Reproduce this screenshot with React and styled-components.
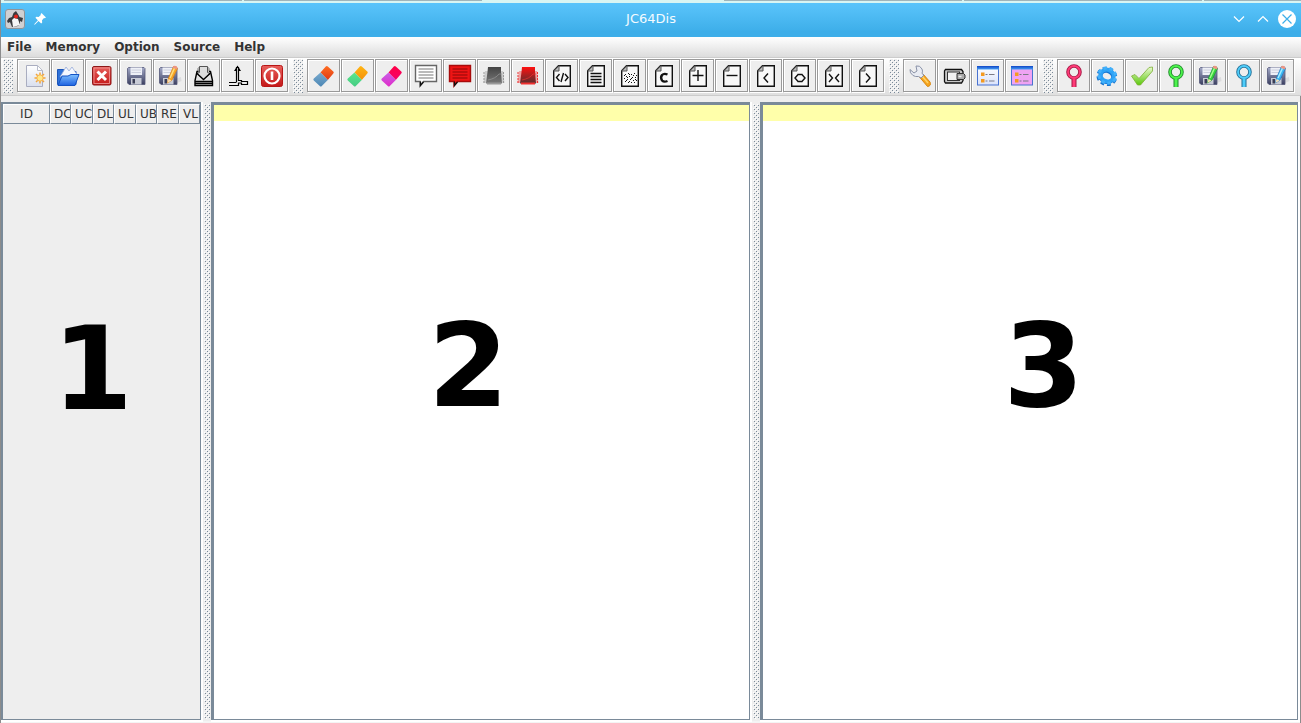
import React from "react";
import styled, { createGlobalStyle } from "styled-components";

const GlobalStyle = createGlobalStyle`
  html, body { margin: 0; padding: 0; }
  body { background: #eeeeee; font-family: "DejaVu Sans", sans-serif; }
  *, *::before, *::after { box-sizing: border-box; }
`;

const Desktop = styled.div`
  display: flex;
  flex-direction: column;
  min-height: 100vh;
  padding-left: 1px;
  background: #8c8c8c;
`;

const BackgroundTabs = styled.div`
  display: flex;
  height: 3px;
  padding-left: 2px;
  overflow: hidden;
  background: #d8f5f3;
`;

const BackgroundTab = styled.div`
  flex: 0 0 238px;
  margin: 0 1px 2px 1px;
  background: ${(p) => (p.$active ? "#d8f5f3" : "#9eb4bb")};
`;

const TitleBar = styled.header`
  display: grid;
  grid-template-columns: 1fr auto 1fr;
  align-items: center;
  height: 34px;
  padding: 0 4px 2px;
  background: linear-gradient(#58c4fb, #52bef6 25%, #3daee9 85%);
`;

const TitleIcons = styled.div`
  display: flex;
  align-items: center;
  gap: 8px;
`;

const Title = styled.h1`
  margin: 0;
  font: 400 13px/18px "DejaVu Sans", sans-serif;
  color: #f4fbff;
`;

const WindowControls = styled.div`
  display: flex;
  justify-content: flex-end;
  gap: 4px;
`;

const WindowButton = styled.button`
  display: flex;
  width: 20px;
  height: 20px;
  padding: 0;
  border: 0;
  background: none;
`;

const MenuBar = styled.nav`
  display: flex;
  gap: 14px;
  height: 20px;
  padding: 0 6px;
  background: linear-gradient(#ffffff, #dcdcdc);
`;

const MenuButton = styled.button`
  padding: 0;
  border: 0;
  background: none;
  color: #333333;
  font: 700 12px/20px "DejaVu Sans", sans-serif;
`;

const ToolBar = styled.div`
  display: flex;
  gap: 5px;
  height: 39px;
  padding: 1px 0 2px 2px;
  border-top: 1px solid #cccccc;
  border-bottom: 1px solid #cccccc;
  background: linear-gradient(#ffffff, #dfdfdf);
`;

const ToolGroup = styled.div`
  display: flex;
  gap: 1px;
`;

const Grip = styled.div`
  width: 10px;
  height: 34px;
  margin-right: 3px;
`;

const ToolButton = styled.button`
  display: flex;
  align-items: center;
  justify-content: center;
  width: 33px;
  height: 33px;
  padding: 0;
  border: 1px solid #999999;
  background: #eeeeee;
  box-shadow: inset 1px 1px 0 #ffffff, 1px 1px 0 #ffffff;
`;

const Workspace = styled.main`
  flex: 1;
  display: grid;
  grid-template-columns: 202px 8px 541fr 8px 540fr;
  margin-right: 1px;
  padding-top: 6px;
  border-bottom: 2px solid #f4f4f4;
  background: #eeeeee;
`;

const Panel = styled.section`
  min-width: 0;
  border-style: solid;
  border-color: #7a8a99;
  border-width: ${(p) => (p.$text ? "3px 1px 1px 3px" : "2px 1px 1px 2px")};
  margin-right: 2px;
  margin-bottom: 1px;
  box-shadow: 1px 1px 0 1px #ffffff;
  background: ${(p) => (p.$text ? "#ffffff" : "#eeeeee")};
`;

const Divider = styled.div`
  background: #eeeeee;
  padding: 2px 1px;
`;

const MemoryTable = styled.table`
  width: 197px;
  table-layout: fixed;
  border-collapse: separate;
  border-spacing: 0;
`;

const HeadCell = styled.th`
  width: ${(p) => p.$width}px;
  height: 20px;
  padding: ${(p) => (p.$centered ? "0" : "0 0 0 3px")};
  border-style: solid;
  border-width: 1px;
  border-color: #ffffff #7a8a99 #7a8a99 #ffffff;
  overflow: hidden;
  white-space: nowrap;
  text-align: ${(p) => (p.$centered ? "center" : "left")};
  font: 400 12px/18px "DejaVu Sans", sans-serif;
  color: #333333;
`;

const CurrentLine = styled.div`
  height: 16px;
  background: #ffffaa;
`;

const PanelNumber = styled.div`
  padding-top: 177px;
  padding-left: ${(p) => p.$indent};
  font: 700 116px/136px "DejaVu Sans", sans-serif;
  color: #000000;
`;

function Bumps({ id }) {
  return (
    <svg width="100%" height="100%" display="block" shapeRendering="crispEdges" aria-hidden="true">
      <defs>
        <pattern id={id} width="4" height="4" patternUnits="userSpaceOnUse">
          <rect width="4" height="4" fill="#eeeeee" />
          <path d="M0 0h1v1h-1zM2 2h1v1h-1z" fill="#ffffff" />
          <path d="M1 1h1v1h-1zM3 3h1v1h-1z" fill="#7a8a99" />
        </pattern>
      </defs>
      <rect width="100%" height="100%" fill={`url(#${id})`} />
    </svg>
  );
}

const Icon = ({ children }) => (
  <svg width="25" height="25" viewBox="0 0 25 25" fill="none" aria-hidden="true">
    {children}
  </svg>
);

const NewIcon = () => (
  <Icon>
    <path d="M5.5 2.5h11l5 5v16h-16z" fill="url(#paper)" stroke="#a9adc0" />
    <path d="M16.500 2.500v5h5z" fill="#ffffff" stroke="#b9bdcb" />
    <g stroke="#f3a53c" strokeWidth="1.500">
      <path d="M19 9.500v11M13.500 15h11M15 11l8 8M23 11l-8 8" />
    </g>
    <circle cx="19" cy="15" r="3.200" fill="#ffe98a" stroke="#f5b14c" />
  </Icon>
);

const OpenIcon = () => (
  <Icon>
    <path d="M2.500 6.500h6l1.500 2h11v13h-18.500z" fill="#2f72d8" stroke="#1c55b8" />
    <path d="M5 14l6-10 3 4 3-4 6 9z" fill="#f5f8ff" stroke="#95a9d8" strokeWidth=".8" />
    <path d="M3 22.500l4-9.500 6 0 3-1.500h8l-4 11z" fill="url(#folder)" stroke="#1453c4" />
  </Icon>
);

const CloseIcon = () => (
  <Icon>
    <rect x="3.500" y="3.500" width="18.500" height="18.500" rx="1.500" fill="url(#red)" stroke="#8c1717" />
    <rect x="5" y="5" width="15.500" height="15.500" stroke="#f09a98" strokeWidth=".8" />
    <path d="M8.500 8.500l8.500 8.500M17 8.500l-8.500 8.500" stroke="#fff" strokeWidth="3" />
  </Icon>
);

const Floppy = () => (
  <>
    <path d="M5.500 4.500h15.500l1 1v16h-16l-1.500-1.500v-14.500z" fill="url(#floppy)" stroke="#55597a" strokeWidth=".8" />
    <rect x="7.500" y="4.500" width="11.500" height="7.500" fill="#eef0f7" />
    <path d="M8.500 7h9.500M8.500 9.500h9.500" stroke="#c3c7d6" strokeWidth=".8" />
    <rect x="8" y="15" width="10.500" height="6.500" fill="#c8cbd6" />
    <rect x="9.500" y="16" width="2.500" height="4.500" fill="#3a3d55" />
  </>
);

const SaveIcon = () => (
  <Icon>
    <Floppy />
  </Icon>
);

const SaveAsIcon = ({ color = "#f9a825", light = "#ffdf80", dark = "#d77a13" }) => (
  <Icon>
    <path d="M18 16l6-2 .5 4-6.500 3z" fill="#dcdcde" />
    <g transform="translate(-2 0)">
      <Floppy />
    </g>
    <path d="M10.500 20l1-5 5-11.500q3-1 4 2l-5.500 11.500z" fill={color} stroke={dark} strokeWidth=".7" />
    <path d="M13 15l5-11" stroke={light} strokeWidth="1.500" />
    <path d="M10.500 20l1-4 3 1.500z" fill="#f7dfb5" />
    <path d="M16.500 3q3-1 4 2l-.8 1.500-4-1.700z" fill="#ed9583" />
  </Icon>
);

const ExportIcon = () => (
  <Icon>
    <path d="M9 3.500h7l2 2v7h-11v-7z" fill="#ddd" stroke="#777" />
    <path d="M7.500 8.500h-1.500l-2 9v5h17.500v-5l-2-9h-1.500" fill="#e2e2e2" stroke="#000" strokeWidth="1.400" />
    <path d="M8.500 3.500v6l-2.500 1 6.500 6 6.500-6-2.500-1v-6z" fill="#dedede" stroke="#555" strokeWidth="1" />
    <path d="M5.500 10l7 6.500 7-6.500" stroke="#000" strokeWidth="1.300" />
    <path d="M4 18.500h17.500M4 20.500h17.500" stroke="#000" strokeWidth="1.300" />
  </Icon>
);

const MergeIcon = () => (
  <Icon>
    <path d="M11.500 19v-15M13.500 18v-14M4 19.500h7.500M4 22.500h9.500v-2.500h3v1.500h6v-3h-6v-1h-3" stroke="#000" strokeWidth="1.200" />
    <path d="M9 8l3.500-5.500 3.500 5.500h-2.500v-3h-2v3z" fill="#000" />
  </Icon>
);

const ExitIcon = () => (
  <Icon>
    <rect x="2.500" y="2.500" width="21" height="21" rx="2" fill="url(#red)" stroke="#b81616" />
    <circle cx="13" cy="13" r="7.500" stroke="#fff" strokeWidth="2.200" />
    <path d="M13 8.500v8.500" stroke="#fff" strokeWidth="2.600" />
  </Icon>
);

const EraserIcon = ({ top, bottom }) => (
  <Icon>
    <path d="M9.500 9.500l5.300-6q1-1 2 0l5.500 5q1 1 0 2l-5.500 6.500z" fill={`url(#${top})`} />
    <path d="M9.500 9.500l7.300 7.500-6 6q-1 1-2 0l-6-5.500q-1-1 0-2z" fill={`url(#${bottom})`} />
  </Icon>
);

const CommentIcon = ({ fill, line, stroke }) => (
  <Icon>
    <path d="M2.500 2.500h21v16h-13l-3.500 4.500v-4.500h-4.500z" fill={fill} stroke={stroke} strokeWidth="1.400" />
    <path d="M5.500 6h15M5.500 9h15M5.500 12h15M5.500 15h15" stroke={line} strokeWidth="1.200" />
    <path d="M7.500 18.500v4l3-3.500" stroke="#111" strokeWidth="1.200" />
  </Icon>
);

const BlockIcon = ({ edge, from }) => (
  <Icon>
    <path d="M4 8h18l1.500 12h-21z" fill={edge} opacity=".4" />
    <path d="M3 9v11M22.500 9v11" stroke={edge} strokeDasharray="2 1" />
    <path d="M7 4h13v5l1 11.500h-16l1.500-11.500z" fill={`url(#${from})`} />
    <path d="M7 17c5-1 9-3 11-6h3" stroke={edge} opacity=".7" />
    <path d="M6 20.500h14" stroke={edge} strokeWidth="2" />
  </Icon>
);

const PageIcon = ({ children }) => (
  <Icon>
    <path d="M9.500 2.700h11.800v20.600h-16.600v-15.500z" fill="#f8f8f8" stroke="#111" strokeWidth="1.400" />
    <path d="M10 2.700v5.300h-5.300z" fill="#b9b9b9" stroke="#555" strokeWidth="1" />
    <g stroke="#111" strokeWidth="1.400">{children}</g>
  </Icon>
);

const NOISE = [
  [8, 11], [11, 10], [14, 11], [17, 10], [19, 12], [9, 13], [12, 13], [15, 14], [18, 14], [7, 15],
  [10, 16], [13, 16], [16, 17], [19, 17], [8, 18], [11, 19], [14, 19], [17, 19], [12, 11], [16, 12],
  [7, 12], [10, 14], [14, 15], [9, 17], [18, 16], [12, 18],
];

const WrenchIcon = () => (
  <Icon>
    <path d="M12.500 14l3.500-3 7 8q1.500 4-2.500 4.500z" fill="#f6a51f" stroke="#d9860f" />
    <path d="M15 13l6 7" stroke="#ffd469" strokeWidth="1.500" />
    <path d="M3 6.500l4 3.500 3-2-1-5q4-1 6 3 1 2 0 4.500l2 1.500-3 3-2.500-1.500q-3 .5-5.500-1-3.500-2.500-3-6z" fill="#e9ecf3" stroke="#8b93a8" />
  </Icon>
);

const TapeIcon = () => (
  <Icon>
    <path d="M4.500 6.500h16l1.500 2v9l-1.500 2.500h-16l-1-1.500v-10.500z" fill="#c8c8c8" stroke="#111" strokeWidth="1.300" />
    <rect x="6.500" y="9" width="12" height="8.500" fill="#f3f3f3" stroke="#333" />
    <path d="M16 10.500h6.500l1.500 1.500v3l-1.500 1.500h-6.500z" fill="#aaa" stroke="#333" />
    <path d="M17.500 13.500h3" stroke="#eee" strokeWidth="1.500" />
  </Icon>
);

const FormIcon = ({ fill }) => (
  <Icon>
    <rect x="2.500" y="3.500" width="21" height="18.500" fill={fill} stroke="#4973d1" />
    <rect x="2" y="3" width="22" height="3.500" fill="url(#formbar)" />
    <path d="M6 9.500h3.500v3.500h-3.500zM6 16h3.500v3.500h-3.500z" fill="#f49a20" />
    <path d="M10.500 11.500h2M14 11.500h5.500M10.500 18h2M14 18h5.500" stroke="#7b7b86" strokeWidth="1.200" />
  </Icon>
);

const PinIcon = ({ color, edge }) => (
  <Icon>
    <path d="M13 15v9" stroke={edge} strokeWidth="5" />
    <circle cx="13" cy="9" r="6" stroke={edge} strokeWidth="3.600" />
    <circle cx="13" cy="9" r="6" stroke={color} strokeWidth="1.800" />
    <path d="M13 15.500v8.500" stroke={color} strokeWidth="3" />
  </Icon>
);

const GearIcon = () => (
  <Icon>
    <g transform="rotate(20 12 13)">
      <ellipse cx="12" cy="13.500" rx="8.500" ry="7.500" stroke="#1674cf" strokeWidth="4" strokeDasharray="3.500 2.700" />
      <ellipse cx="12" cy="13.500" rx="6.500" ry="5.500" stroke="#1674cf" strokeWidth="4" />
      <ellipse cx="12" cy="12.500" rx="6.800" ry="5.800" stroke="#2ea3f6" strokeWidth="4" />
      <ellipse cx="12" cy="12.500" rx="8.500" ry="7.500" stroke="#42b0fa" strokeWidth="3" strokeDasharray="3.500 2.700" />
    </g>
  </Icon>
);

const CheckIcon = () => (
  <Icon>
    <path d="M2.500 13l3.500-1.500 4 4 10-11 3.500-.5v4l-12 14h-3z" fill="url(#check)" stroke="#7fae38" strokeWidth=".8" />
  </Icon>
);

const GRADIENTS = [
  ["paper", "#ffffff", "#d9dfee"],
  ["folder", "#7fc0ff", "#1e62e0"],
  ["red", "#e8605c", "#c41818"],
  ["floppy", "#a4aac8", "#3b3f60"],
  ["orange", "#ff6d20", "#de3a17"],
  ["steel", "#79aace", "#4c87b5"],
  ["amber", "#ffb515", "#f59208"],
  ["mint", "#5be68c", "#45cc84"],
  ["rose", "#ff0045", "#f5006a"],
  ["violet", "#c95fe8", "#e02cc8"],
  ["ash", "#444444", "#777777"],
  ["ember", "#ff1010", "#553030"],
  ["formbar", "#0f45c5", "#46a0f7"],
  ["pane", "#ffffff", "#d9e2fb"],
  ["check", "#eafad0", "#5cc80c"],
];

const Defs = () => (
  <svg width="0" height="0" display="block" aria-hidden="true">
    <defs>
      {GRADIENTS.map(([id, from, to]) => (
        <linearGradient key={id} id={id} x1="0" y1="0" x2="0" y2="1">
          <stop offset="0" stopColor={from} />
          <stop offset="1" stopColor={to} />
        </linearGradient>
      ))}
    </defs>
  </svg>
);

const GROUPS = [
  [
    ["New project", <NewIcon />],
    ["Open project", <OpenIcon />],
    ["Close project", <CloseIcon />],
    ["Save project", <SaveIcon />],
    ["Save project as", <SaveAsIcon />],
    ["Export", <ExportIcon />],
    ["Merge", <MergeIcon />],
    ["Exit", <ExitIcon />],
  ],
  [
    ["Clear memory comment", <EraserIcon top="orange" bottom="steel" />],
    ["Clear label", <EraserIcon top="amber" bottom="mint" />],
    ["Clear user label", <EraserIcon top="rose" bottom="violet" />],
    ["Add comment", <CommentIcon fill="#ffffff" line="#777777" stroke="#666666" />],
    ["Add block comment", <CommentIcon fill="#ee1515" line="#8c0808" stroke="#a80c0c" />],
    ["Add label", <BlockIcon edge="#999999" from="ash" />],
    ["Add user label", <BlockIcon edge="#f03030" from="ember" />],
    ["Mark as code", <PageIcon><path d="M10.500 11l-3 3.500 3 3.500M16 11l3 3.500-3 3.500M14.500 10l-2.500 9" /></PageIcon>],
    ["Mark as data", <PageIcon><path d="M7.500 10.500h11M7.500 13.500h11M7.500 16.500h11M7.500 19.500h11" /></PageIcon>],
    ["Mark as garbage", <PageIcon><g fill="#111" stroke="none">{NOISE.map(([x, y]) => <rect key={`${x}-${y}`} x={x} y={y} width="1" height="1" />)}</g></PageIcon>],
    ["Assign constant", <PageIcon><path d="M16.500 11.500q-3.500-1.500-5.500.5-1.800 2.500 0 5.500 2 2 5.500.5" strokeWidth="2.400" /></PageIcon>],
    ["Plus", <PageIcon><path d="M7.500 12.500h11M13 7v11" /></PageIcon>],
    ["Minus", <PageIcon><path d="M7.500 12.500h11" /></PageIcon>],
    ["Low", <PageIcon><path d="M15 10.500l-4 4.500 4 4.500" /></PageIcon>],
    ["Low and high", <PageIcon><path d="M11.500 11l-3.500 4 3.500 4M14.500 11l3.500 4-3.500 4M11.500 11.500h3M11.500 18.500h3" /></PageIcon>],
    ["High and low", <PageIcon><path d="M8 11l3.500 4-3.500 4M18 11l-3.500 4 3.500 4" /></PageIcon>],
    ["High", <PageIcon><path d="M11 10.500l4 4.500-4 4.500" /></PageIcon>],
  ],
  [
    ["Options", <WrenchIcon />],
    ["SID frequency", <TapeIcon />],
    ["Source settings", <FormIcon fill="url(#pane)" />],
    ["Preview settings", <FormIcon fill="#efa3f3" />],
  ],
  [
    ["Find memory", <PinIcon color="#ff3b78" edge="#a31945" />],
    ["Disassemble", <GearIcon />],
    ["Assemble", <CheckIcon />],
    ["Find in disassembly", <PinIcon color="#4cf34c" edge="#218a2c" />],
    ["Save disassembly", <SaveAsIcon color="#37d43e" light="#a1ff8c" dark="#1b8a33" />],
    ["Find in source", <PinIcon color="#4fcdfa" edge="#236f96" />],
    ["Save source", <SaveAsIcon color="#3cb8f2" light="#a5ecff" dark="#2372bd" />],
  ],
];

const COLUMNS = [["ID", 47], ["DC", 21], ["UC", 22], ["DL", 21], ["UL", 22], ["UB", 21], ["RE", 22], ["VL", 21]];

const MENUS = ["File", "Memory", "Option", "Source", "Help"];

export default function App() {
  return (
    <Desktop>
      <GlobalStyle />
      <BackgroundTabs>
        <BackgroundTab />
        <BackgroundTab />
        <BackgroundTab $active />
        <BackgroundTab />
        <BackgroundTab />
        <BackgroundTab />
      </BackgroundTabs>
      <TitleBar>
        <TitleIcons>
          <svg width="20" height="20" viewBox="0 0 20 20" fill="none" aria-hidden="true">
            <rect x=".5" y=".5" width="19" height="19" rx="2.500" fill="#d0d0d2" stroke="#909498" />
            <path d="M2 12l2-3 3-1 1.500-4 2.500-2 2.500 4 1 2 3.500 1-1 4-2-1v3l-2 2-6 1-2-5-2 1z" fill="#3a3a3d" />
            <path d="M7 11l2-2 4 1 2 6-7 2z" fill="#f6f6f6" />
            <circle cx="11" cy="7.500" r="2" fill="#e8251c" />
          </svg>
          <svg width="14" height="14" viewBox="0 0 14 14" aria-hidden="true">
            <path d="M8.500 1l4.500 4.500-1.200.8-.8-.2-2 2.200.2 2.200-1 1-2.700-2.600-3.500 3.600-.8.200.2-.8 3.500-3.600-2.500-2.500 1-1 2.200.2 2.200-2-.2-.8z" fill="#ffffff" />
          </svg>
        </TitleIcons>
        <Title>JC64Dis</Title>
        <WindowControls>
          <WindowButton aria-label="Minimize">
            <svg width="20" height="20" fill="none"><path d="M5 7.500l5 5 5-5" stroke="#fff" strokeWidth="1.200" /></svg>
          </WindowButton>
          <WindowButton aria-label="Maximize">
            <svg width="20" height="20" fill="none"><path d="M5 12.500l5-5 5 5" stroke="#fff" strokeWidth="1.200" /></svg>
          </WindowButton>
          <WindowButton aria-label="Close">
            <svg width="20" height="20" fill="none">
              <circle cx="10" cy="10" r="9" fill="#fff" />
              <path d="M5.500 5.500l9 9M14.500 5.500l-9 9" stroke="#3daee9" strokeWidth="1.200" />
            </svg>
          </WindowButton>
        </WindowControls>
      </TitleBar>
      <MenuBar aria-label="Main menu">
        {MENUS.map((name) => (
          <MenuButton key={name}>{name}</MenuButton>
        ))}
      </MenuBar>
      <ToolBar role="toolbar" aria-label="Tools">
        {GROUPS.map((tools, index) => (
          <ToolGroup key={index}>
            <Grip>
              <Bumps id={`grip-${index}`} />
            </Grip>
            {tools.map(([label, icon]) => (
              <ToolButton key={label} aria-label={label}>
                {icon}
              </ToolButton>
            ))}
          </ToolGroup>
        ))}
      </ToolBar>
      <Workspace>
        <Panel>
          <MemoryTable>
            <thead>
              <tr>
                {COLUMNS.map(([name, width]) => (
                  <HeadCell key={name} $width={width} $centered={name === "ID"}>
                    {name}
                  </HeadCell>
                ))}
              </tr>
            </thead>
          </MemoryTable>
          <PanelNumber $indent="25%">1</PanelNumber>
        </Panel>
        <Divider>
          <Bumps id="divider-left" />
        </Divider>
        <Panel $text>
          <CurrentLine />
          <PanelNumber $indent="40%">2</PanelNumber>
        </Panel>
        <Divider>
          <Bumps id="divider-right" />
        </Divider>
        <Panel $text>
          <CurrentLine />
          <PanelNumber $indent="45%">3</PanelNumber>
        </Panel>
      </Workspace>
      <Defs />
    </Desktop>
  );
}
